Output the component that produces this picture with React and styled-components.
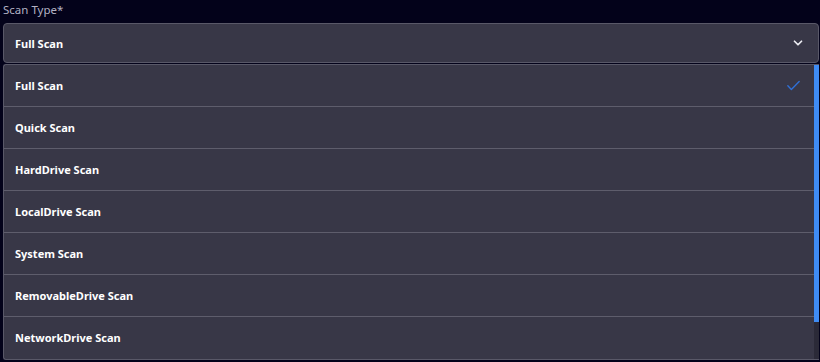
import React, { useState } from "react";
import styled, { createGlobalStyle } from "styled-components";

const options = [
  "Full Scan",
  "Quick Scan",
  "HardDrive Scan",
  "LocalDrive Scan",
  "System Scan",
  "RemovableDrive Scan",
  "NetworkDrive Scan",
];

const App = () => {
  const [value, setValue] = useState("Full Scan");

  return (
    <>
      <GlobalStyle />
      <Field>
        <Label>Scan Type*</Label>
        <Trigger type="button">
          <span>{value}</span>
          <svg width="14" height="14" viewBox="0 0 24 24" fill="none" stroke="#ececf2" strokeWidth="3" strokeLinecap="round" strokeLinejoin="round">
            <path d="M6 9l6 6 6-6" />
          </svg>
        </Trigger>
        <Menu>
          <List>
            {options.map((opt, i) => (
              <Item key={opt} first={i === 0} onClick={() => setValue(opt)}>
                <span>{opt}</span>
                {opt === value && (
                  <svg width="17" height="17" viewBox="0 0 24 24" fill="none" stroke="#2f6fd6" strokeWidth="2" strokeLinecap="round" strokeLinejoin="round">
                    <path d="M4 12.5l5 5L20 6.5" />
                  </svg>
                )}
              </Item>
            ))}
          </List>
          <Track>
            <Thumb />
          </Track>
        </Menu>
      </Field>
    </>
  );
};
export default App;

const GlobalStyle = createGlobalStyle`
  body {
    margin: 0;
    background: #03021a;
    font-family: "Noto Sans", "Open Sans", sans-serif;
  }
`;

const Field = styled.div`
  padding: 1px 1px 0 3px;
  display: flex;
  flex-direction: column;
`;

const Label = styled.label`
  font-size: 11.5px;
  color: #b2b1c3;
  line-height: 18px;
  height: 22px;
`;

const Trigger = styled.button`
  height: 40px;
  display: flex;
  align-items: center;
  justify-content: space-between;
  padding: 0 13px 0 11px;
  background: #383747;
  border: 1px solid #595868;
  border-radius: 4px;
  color: #fff;
  font-family: inherit;
  font-size: 11px;
  font-weight: 700;
  cursor: pointer;
`;

const Menu = styled.div`
  margin-top: 1px;
  height: 294px;
  display: flex;
  background: #383747;
  border: 1px solid #595868;
  border-right: none;
  border-radius: 3px 0 0 3px;
  overflow: hidden;
`;

const List = styled.ul`
  flex: 1;
  margin: 0;
  padding: 0;
  list-style: none;
`;

const Item = styled.li`
  height: 41px;
  display: flex;
  align-items: center;
  justify-content: space-between;
  padding: 0 12px 0 11px;
  border-top: ${(p) => (p.first ? "none" : "1px solid #5e5d6c")};
  color: #fff;
  font-size: 11px;
  font-weight: 700;
  cursor: pointer;
`;

const Track = styled.div`
  width: 5px;
  background: #2b2a38;
`;

const Thumb = styled.div`
  height: 257px;
  background: #3f8cf5;
`;
